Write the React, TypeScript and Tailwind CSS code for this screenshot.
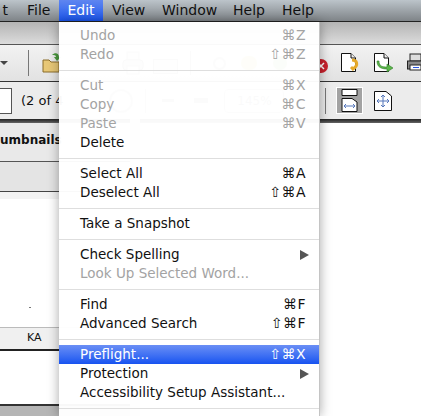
import React from 'react';

type Item = { label?: string; shortcut?: string; disabled?: boolean; active?: boolean; submenu?: boolean; sep?: boolean };

const items: Item[] = [
  { label: 'Undo', shortcut: '⌘Z', disabled: true },
  { label: 'Redo', shortcut: '⇧⌘Z', disabled: true },
  { sep: true },
  { label: 'Cut', shortcut: '⌘X', disabled: true },
  { label: 'Copy', shortcut: '⌘C', disabled: true },
  { label: 'Paste', shortcut: '⌘V', disabled: true },
  { label: 'Delete' },
  { sep: true },
  { label: 'Select All', shortcut: '⌘A' },
  { label: 'Deselect All', shortcut: '⇧⌘A' },
  { sep: true },
  { label: 'Take a Snapshot' },
  { sep: true },
  { label: 'Check Spelling', submenu: true },
  { label: 'Look Up Selected Word...', disabled: true },
  { sep: true },
  { label: 'Find', shortcut: '⌘F' },
  { label: 'Advanced Search', shortcut: '⇧⌘F' },
  { sep: true },
  { label: 'Preflight...', shortcut: '⇧⌘X', active: true },
  { label: 'Protection', submenu: true },
  { label: 'Accessibility Setup Assistant...' },
  { sep: true },
];

const MenuRow = ({ item }: { item: Item }) => {
  if (item.sep) {
    return (
      <div className="h-[12px] flex items-center">
        <div className="h-px w-full bg-[#dedede]" />
      </div>
    );
  }
  return (
    <div
      className={`h-[19px] flex items-center justify-between pl-[21px] pr-[13px] ${
        item.active
          ? 'bg-gradient-to-b from-[#6a8ef5] to-[#1652f0] text-white'
          : item.disabled
            ? 'text-[#a3a3a3]'
            : 'text-[#111]'
      }`}
    >
      <span>{item.label}</span>
      {item.shortcut && <span className="text-[14px] tracking-[0.5px]">{item.shortcut}</span>}
      {item.submenu && (
        <svg width="9" height="10" viewBox="0 0 9 10" className="mr-[-3px]">
          <path d="M0 0L9 5L0 10Z" fill="#555" />
        </svg>
      )}
    </div>
  );
};

const DocIcon = ({ children }: { children?: React.ReactNode }) => (
  <svg width="24" height="22" viewBox="2 0 24 22">
    <path d="M2.5 1.5H12L16.5 6V19.5H2.5Z" fill="#fff" stroke="#111" />
    <path d="M12 1.5V6H16.5" fill="#eee" stroke="#111" />
    {children}
  </svg>
);

const Sep = () => <div className="w-px h-[26px] bg-[#777]" />;

export default function App() {
  return (
    <div
      className="relative w-[421px] h-[416px] overflow-hidden bg-white text-[13px] flex flex-col"
      style={{ fontFamily: '"DejaVu Sans", sans-serif' }}
    >
      {/* Menu bar */}
      <div className="h-[22px] shrink-0 flex items-center border-b border-[#222] bg-gradient-to-b from-[#bcc4ca] to-[#7f8488] text-[14px] text-[#111]">
        <span className="w-[27px] text-right pr-[19px]">t</span>
        <span className="w-[32px]">File</span>
        <span className="w-[44px] h-full flex items-center justify-center text-white bg-gradient-to-b from-[#5f86f0] to-[#1a55ee]">Edit</span>
        <span className="ml-[9px] w-[50px]">View</span>
        <span className="w-[71px]">Window</span>
        <span className="w-[49px]">Help</span>
        <span>Help</span>
      </div>

      {/* Title strip */}
      <div className="h-[23px] shrink-0 border-b border-[#555] bg-gradient-to-b from-[#b4b4b4] to-[#dcdcdc]" />

      {/* Toolbar one */}
      <div className="h-[37px] shrink-0 flex items-center border-b border-[#333] bg-gradient-to-b from-[#f2f2f2] to-[#e2e2e2]">
        <div className="w-0 h-0 border-x-[4px] border-x-transparent border-t-[4px] border-t-[#444]" />
        <div className="ml-[20px]"><Sep /></div>
        <svg width="20" height="22" viewBox="0 0 20 22" className="ml-[13px]">
          <path d="M1 8H7L9 10H17V20H1Z" fill="#e8c877" stroke="#8a6d2a" />
          <path d="M10 3C13 0 17 1 17 5L19 5L15 9L12 5L14 5C14 3 12 3 10 3Z" fill="#4a9a3d" />
        </svg>
        <svg width="24" height="24" viewBox="0 0 24 24" className="ml-[59px]">
          <rect x="6" y="1" width="12" height="8" fill="#ddd" stroke="#777" />
          <rect x="2" y="9" width="20" height="10" rx="3" fill="#bbb" stroke="#666" />
          <rect x="6" y="15" width="12" height="8" fill="#fff" stroke="#777" />
        </svg>
        <div className="ml-[8px] w-[25px] h-[15px] mt-[6px] bg-[#ddd] border border-[#777]" />
        <div className="ml-[12px] w-px h-[24px] bg-[#888]" />
        <div className="ml-[22px] w-[13px] h-[13px] rounded-full border-2 border-[#999]" />
        <div className="ml-[15px] w-[16px] h-[14px] rounded-full bg-[#d9c53a]" />
        <div className="ml-[16px] w-[14px] h-[14px] rounded-full bg-[#8ab85c]" />
        <div className="ml-auto flex items-center">
          <svg width="9" height="20" viewBox="0 0 9 20">
            <circle cx="1" cy="13" r="7" fill="#c8202c" />
            <path d="M-2 10L4 16M4 10L-2 16" stroke="#fff" strokeWidth="1.5" />
          </svg>
          <div className="ml-[12px]">
            <DocIcon>
              <path d="M13 8C18 8 20 13 14 17L12 15" fill="none" stroke="#e6a92a" strokeWidth="3" />
            </DocIcon>
          </div>
          <div className="ml-[9px]">
            <DocIcon>
              <path d="M7 9C7 14 10 15 15 15V12L21 16L15 20V17C9 17 5 15 5 9Z" fill="#5cb54a" stroke="#2f7d28" strokeWidth="0.6" />
            </DocIcon>
          </div>
          <svg width="14" height="20" viewBox="0 0 14 20" className="ml-[9px]">
            <rect x="3" y="1" width="11" height="7" fill="#ddd" stroke="#222" />
            <rect x="0.5" y="8" width="14" height="8" fill="#888" stroke="#222" />
            <rect x="3" y="12" width="11" height="5" fill="#fff" stroke="#222" />
            <rect x="6" y="14" width="6" height="1" fill="#2a56e0" />
          </svg>
        </div>
      </div>

      {/* Toolbar two */}
      <div className="h-[37px] shrink-0 flex items-center bg-[#ececec]">
        <div className="w-[12px] h-[26px] bg-white border border-l-0 border-[#555]" />
        <span className="ml-[9px] text-[13px] text-[#111] whitespace-nowrap">(2 of 4</span>
        <div className="ml-[46px] w-[24px] h-[24px] rounded-full border-2 border-[#aaa]" />
        <div className="ml-[12px] w-px h-[24px] bg-[#999]" />
        <div className="ml-[16px] w-[12px] h-[3px] bg-[#888]" />
        <div className="ml-[20px] w-[14px] h-[5px] bg-[#888]" />
        <div className="ml-[16px] w-[60px] h-[24px] border border-[#aaa] rounded-sm flex items-center justify-center text-[12px] text-[#666]">145%</div>
        <div className="ml-auto flex items-center pr-[29px]">
          <Sep />
          <div className="ml-[10px] w-[27px] h-[27px] bg-[#a3a3a3] border border-white flex items-center justify-center">
            <svg width="17" height="23" viewBox="0 0 17 23">
              <path d="M1 .5H16V6.5H1Z" fill="#fff" stroke="#111" />
              <path d="M1 9.5H11L16 13V22.5H1Z" fill="#fff" stroke="#111" />
              <path d="M3 17H14M3 17L5 15M3 17L5 19M14 17L12 15M14 17L12 19" fill="none" stroke="#5577bb" />
            </svg>
          </div>
          <svg width="18" height="20" viewBox="0 0 18 20" className="ml-[11px]">
            <path d="M.5 .5H12L17.5 5V19.5H.5Z" fill="#fff" stroke="#111" />
            <path d="M9 4V16M3 10H15M9 4L7 6M9 4L11 6M9 16L7 14M9 16L11 14M3 10L5 8M3 10L5 12M15 10L13 8M15 10L13 12" fill="none" stroke="#5577bb" />
          </svg>
        </div>
      </div>

      {/* Document area */}
      <div className="flex-1 flex">
        <div className="w-[130px] flex flex-col bg-white">
          <div className="h-[4px] bg-gradient-to-b from-[#222] to-[#666]" />
          <div className="h-[39px] flex items-center bg-[#e9e9e9] border-b border-[#555] font-bold text-[12px] text-[#111] whitespace-nowrap overflow-hidden">
            <span className="mt-[-4px]">umbnails</span>
          </div>
          <div className="h-[30px] bg-[#e4e4e4] border-b border-[#444]" />
          <div className="h-[7px] bg-[#f3f3f3]" />
          <div className="h-[128px] bg-white relative">
            <div className="absolute left-[29px] top-[108px] w-[2px] h-px bg-[#777]" />
          </div>
          <div className="h-[22px] flex items-center bg-[#f0f0f0] border-t border-[#bbb] text-[11px] text-[#111]">
            <span className="ml-[27px]">KA</span>
          </div>
          <div className="h-[2px] bg-[#222]" />
          <div className="h-[53px] bg-white" />
          <div className="h-[2px] bg-[#333]" />
          <div className="flex-1 bg-[#b5b5b5]" />
        </div>
        <div className="w-[10px] bg-[#cfcfcf]" />
        <div className="flex-1 flex flex-col">
          <div className="h-[4px] bg-gradient-to-b from-[#222] to-[#666]" />
          <div className="flex-1 bg-white" />
        </div>
      </div>

      {/* Edit menu, lies over the window */}
      <div className="absolute left-[59px] top-[22px] w-[261px] h-[394px] pt-[4px] bg-white/[0.97] border-r border-[#c4c4c4] shadow-[0_0_11px_rgba(0,0,0,0.35)] text-[13.5px]">
        {items.map((item, i) => (
          <MenuRow key={i} item={item} />
        ))}
      </div>
    </div>
  );
}
